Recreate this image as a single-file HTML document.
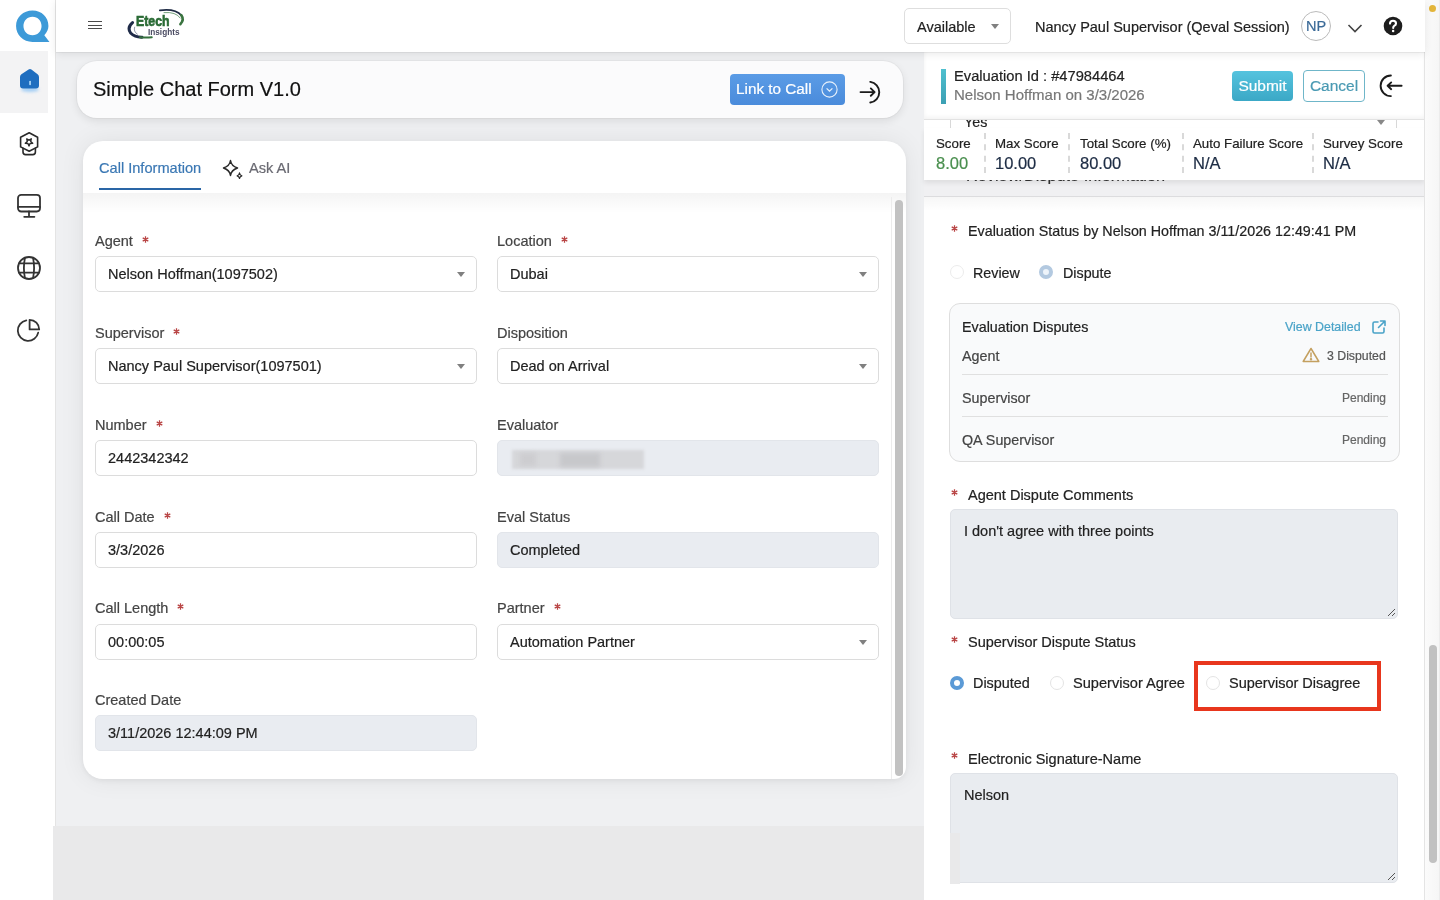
<!DOCTYPE html>
<html><head><meta charset="utf-8">
<style>
*{box-sizing:border-box;margin:0;padding:0}
html,body{width:1440px;height:900px;overflow:hidden;background:#fff;-webkit-font-smoothing:antialiased;font-family:"Liberation Sans",sans-serif;color:#222}
.abs{position:absolute}
span,div{-webkit-text-stroke:0.2px currentColor}
body>div,body>svg{will-change:transform}
#side{left:0;top:0;width:56px;height:900px;background:#fff;border-right:1px solid #e4e4e4}
#hdr{left:56px;top:0;width:1369px;height:52px;background:#fff;box-shadow:0 1px 0 rgba(0,0,0,.05),0 2px 8px rgba(0,0,0,.09);z-index:2}
#main{left:56px;top:52px;width:868px;height:848px;background:#eff0f2}
#mainbot{left:53px;top:826px;width:873px;height:74px;background:#e9e9ea}
#right{left:924px;top:52px;width:501px;height:848px;background:#fff}
#vscroll{left:1424px;top:0;width:16px;height:900px;background:linear-gradient(90deg,#fbfbfb,#f6f6f6);border-left:1px solid #e4e4e4;border-right:1px solid #ececec}
.card{background:#fafafa;border-radius:20px;box-shadow:0 2px 6px rgba(0,0,0,.08)}
.lbl{font-size:14.5px;color:#444}
.req{stroke:#b94545;stroke-width:1.25;fill:none;margin-left:9px;vertical-align:top;position:relative;top:3px}
.rstar{position:absolute;stroke:#b94545;stroke-width:1.25;fill:none}
.inp{height:36px;border:1px solid #dcdcdc;border-radius:5px;background:#fff;font-size:14.5px;color:#222;padding:0 12px;line-height:35px}
.inp.dis{background:#e9ecf1;border-color:#e2e5ea}
.caret{position:absolute;right:11px;top:14.5px;width:0;height:0;border-left:4.5px solid transparent;border-right:4.5px solid transparent;border-top:5px solid #808080}
</style></head>
<body>
<div id="side" class="abs">
  <svg class="abs" style="left:13.5px;top:8px" width="37" height="37" viewBox="0 0 36 36">
    <path d="M18 2.5 C9 2.5 2 9 2 17.5 C2 26 9 33 18 33 L34.5 33 L29.5 26.5 C32 23.8 33.5 20.8 33.5 17.5 C33.5 9 27 2.5 18 2.5 Z M18 8.5 C23.2 8.5 26.8 12.5 26.8 17.5 C26.8 22.5 23.2 26.5 18 26.5 C12.8 26.5 9.2 22.5 9.2 17.5 C9.2 12.5 12.8 8.5 18 8.5 Z" fill="#3d9ad8" fill-rule="evenodd"/>
  </svg>
  <div class="abs" style="left:0;top:51px;width:48px;height:62px;background:#f3f3f4"></div>
  <svg class="abs" style="left:14px;top:62px" width="32" height="36" viewBox="0 0 32 36">
    <defs><filter id="hb" x="-50%" y="-50%" width="200%" height="200%"><feGaussianBlur stdDeviation="1.6"/></filter></defs>
    <ellipse cx="16" cy="27.5" rx="9" ry="2.6" fill="#8cc4f5" opacity=".75" filter="url(#hb)"/>
    <path d="M14.6 7.6 Q16 6.6 17.4 7.6 L23.6 12.2 Q25 13.2 25 15 L25 23.6 Q25 26.6 22 26.6 L9 26.6 Q6 26.6 6 23.6 L6 15 Q6 13.2 7.4 12.2 Z" fill="#1f6ebf"/>
    <rect x="15.3" y="18.8" width="1.5" height="4.4" rx=".75" fill="#bfe6ff"/>
  </svg>
  <svg class="abs" style="left:19px;top:131px" width="21" height="26" viewBox="0 0 21 26" fill="none" stroke="#2a2a2a" stroke-width="1.6" stroke-linejoin="round" stroke-linecap="round">
    <path d="M10.2 1.7 L18.6 6.3 L18.6 15.9 L10.2 20.3 L1.6 15.9 L1.6 6.3 Z"/>
    <path d="M4 17.3 L4 21 Q4 23.6 6.6 23.6 L13.8 23.6 Q16.4 23.6 16.4 21 L16.4 17.3"/>
    <path d="M10.00 14.90 L8.94 12.46 L6.29 12.21 L8.29 10.44 L7.71 7.84 L10.00 9.20 L12.29 7.84 L11.71 10.44 L13.71 12.21 L11.06 12.46 Z" stroke-width="1.4"/>
  </svg>
  <svg class="abs" style="left:16px;top:193px" width="26" height="26" viewBox="0 0 26 26" fill="none" stroke="#333" stroke-width="1.8" stroke-linecap="round">
    <rect x="2" y="1.9" width="22" height="16.6" rx="3.2"/>
    <path d="M2 13.9 L24 13.9"/>
    <path d="M13 18.5 L13 23.6 M8.2 23.8 L18.4 23.8"/>
  </svg>
  <svg class="abs" style="left:16px;top:255px" width="26" height="26" viewBox="0 0 26 26" fill="none" stroke="#333" stroke-width="1.8">
    <circle cx="13" cy="13" r="11"/>
    <path d="M9 2.6 Q6.8 13 9 23.4 M17 2.6 Q19.2 13 17 23.4"/>
    <path d="M2.6 8.4 L23.4 8.4 M2.6 17.6 L23.4 17.6"/>
  </svg>
  <svg class="abs" style="left:16px;top:318px" width="26" height="26" viewBox="0 0 26 26" fill="none" stroke="#333" stroke-width="1.8" stroke-linejoin="round">
    <path d="M10.3 2.4 A10.3 10.3 0 1 0 22.2 14.6" stroke-linecap="round"/>
    <path d="M13.6 1.8 A9.6 9.6 0 0 1 23.2 11.4 L13.6 11.4 Z"/>
  </svg>
</div>
<div id="hdr" class="abs">
  <div class="abs" style="left:32px;top:21px;width:14px;height:1.3px;background:#4a4a4a"></div>
  <div class="abs" style="left:32px;top:24.6px;width:14px;height:1.3px;background:#4a4a4a"></div>
  <div class="abs" style="left:32px;top:28.2px;width:14px;height:1.3px;background:#4a4a4a"></div>
  <svg class="abs" style="left:70px;top:7px" width="62" height="34" viewBox="0 0 62 34" fill="none" stroke-linecap="round">
    <path d="M33.8 3.4 Q49 1.2 55.6 8.6" stroke="#1f2b45" stroke-width="1.7"/>
    <path d="M38 5.6 Q50 4.6 54.2 11" stroke="#3f7c4a" stroke-width="0.9" opacity=".8"/>
    <path d="M55.2 8 Q58.6 12.6 54.4 17.2" stroke="#3a7440" stroke-width="2.6"/>
    <path d="M6.5 15.6 Q0.8 20.5 4.6 26 Q9 30.4 16 30.2" stroke="#1f2b48" stroke-width="3"/>
    <path d="M14 30.3 Q20 30.8 25.8 30.3" stroke="#35703d" stroke-width="1.9"/>
    <path d="M8.6 20.2 Q7.2 24.6 11.4 27.2" stroke="#55607a" stroke-width="0.9" opacity=".7"/>
    <text x="10" y="19.2" style="font-family:'Liberation Sans';font-weight:700;font-size:15.5px" fill="#2a6b35" stroke="#2a6b35" stroke-width="0.7" textLength="33.5" lengthAdjust="spacingAndGlyphs">Etech</text>
    <text x="22" y="27.7" style="font-family:'Liberation Sans';font-weight:700;font-size:8.8px" fill="#4a4b62" textLength="31.5" lengthAdjust="spacingAndGlyphs">Insights</text>
  </svg>
  <div class="abs" style="left:848px;top:8px;width:107px;height:36px;border:1px solid #dedede;border-radius:5px;background:#fff">
    <span class="abs" style="left:12px;top:10px;font-size:14.5px;color:#222">Available</span>
    <div class="abs" style="left:85.5px;top:14.5px;width:0;height:0;border-left:4.5px solid transparent;border-right:4.5px solid transparent;border-top:5.5px solid #808080"></div>
  </div>
  <span class="abs" style="left:979px;top:19px;font-size:14.5px;color:#222;white-space:nowrap">Nancy Paul Supervisor (Qeval Session)</span>
  <div class="abs" style="left:1245px;top:11px;width:30px;height:30px;border:1px solid #bbb;border-radius:50%;font-size:14.5px;color:#3b6a97;text-align:center;line-height:29px">NP</div>
  <svg class="abs" style="left:1291px;top:22px" width="16" height="12" viewBox="0 0 16 12" fill="none" stroke="#444" stroke-width="1.6"><path d="M1.5 3 L8 9.5 L14.5 3"/></svg>
  <svg class="abs" style="left:1327px;top:16px" width="20" height="20" viewBox="0 0 20 20"><circle cx="10" cy="10" r="9.3" fill="#1d1d1d"/><path d="M7 7.6 Q7 4.8 10 4.8 Q13 4.8 13 7.4 Q13 9 11.2 9.9 Q10.2 10.5 10.2 12" fill="none" stroke="#fff" stroke-width="2.1" stroke-linecap="round"/><circle cx="10.1" cy="14.9" r="1.25" fill="#fff"/></svg>
</div>
<div id="main" class="abs">
  <div class="abs card" style="left:21px;top:9px;width:826px;height:57px;background:#fbfbfc;box-shadow:0 0 0 1px rgba(0,0,0,.03),0 3px 8px rgba(0,0,0,.09)">
    <span class="abs" style="left:16px;top:17px;font-size:20px;color:#111;white-space:nowrap">Simple Chat Form V1.0</span>
    <div class="abs" style="left:653px;top:13px;width:115px;height:31px;border-radius:4px;background:linear-gradient(#5b9ce6,#4a8bdb)">
      <span class="abs" style="left:6px;top:6px;font-size:15.3px;color:#fff;white-space:nowrap">Link to Call</span>
      <svg class="abs" style="left:91px;top:7px" width="17" height="17" viewBox="0 0 17 17" fill="none" stroke="#e8f1fb" stroke-width="1.1"><circle cx="8.5" cy="8.5" r="7.6"/><path d="M5.6 7.4 L8.5 10.2 L11.4 7.4" stroke-width="1.3"/></svg>
    </div>
    <svg class="abs" style="left:781px;top:20px" width="26" height="24" viewBox="0 0 26 24" fill="none" stroke="#1b1b1b" stroke-width="1.9" stroke-linecap="round" stroke-linejoin="round"><path d="M12.3 0.9 A10.4 10.4 0 0 1 12.3 21.5"/><path d="M2.5 11.1 L16.6 11.1 M12.8 7.4 L16.6 11.1 L12.8 14.8"/></svg>
  </div>
  <div class="abs" style="left:27px;top:89px;width:823px;height:638px;background:#fff;border-radius:20px 20px 12px 20px;box-shadow:0 2px 5px rgba(0,0,0,.05),0 0 26px rgba(0,0,0,.07);overflow:hidden">
    <span class="abs" style="left:16px;top:19px;font-size:14.6px;color:#3b78b4;white-space:nowrap">Call Information</span>
    <div class="abs" style="left:16px;top:47px;width:102px;height:2px;background:#2a66a6"></div>
    <svg class="abs" style="left:139px;top:18px" width="21" height="20" viewBox="0 0 21 20" fill="none" stroke="#2a2a2a" stroke-width="1.5" stroke-linejoin="round">
      <path d="M8.5 1.5 Q9.3 7 15.5 9 Q9.3 11 8.5 16.5 Q7.7 11 1.5 9 Q7.7 7 8.5 1.5 Z"/>
      <path d="M17.5 14 Q17.8 16.1 19.8 16.8 Q17.8 17.5 17.5 19.5 Q17.2 17.5 15.2 16.8 Q17.2 16.1 17.5 14 Z" stroke-width="1.3"/>
    </svg>
    <span class="abs" style="left:166px;top:19px;font-size:14.6px;color:#6a6a72;white-space:nowrap">Ask AI</span>
    <div class="abs" style="left:0;top:52px;width:823px;height:20px;background:linear-gradient(rgba(0,0,0,.045),rgba(0,0,0,0))"></div>
    <div class="abs" style="left:808px;top:56px;width:1px;height:582px;background:#ececec"></div><div class="abs" style="left:812px;top:59px;width:8px;height:576px;border-radius:4px;background:#c2c2c2"></div>
    <!--F--><span class="abs lbl" style="left:12px;top:92px">Agent<svg class="req" width="7" height="7" viewBox="0 0 7 7"><path d="M3.5 .3V6.7M.7 1.9L6.3 5.1M.7 5.1L6.3 1.9"/></svg></span><div class="abs inp" style="left:12px;top:115px;width:382px">Nelson Hoffman(1097502)<div class="caret"></div></div><span class="abs lbl" style="left:414px;top:92px">Location<svg class="req" width="7" height="7" viewBox="0 0 7 7"><path d="M3.5 .3V6.7M.7 1.9L6.3 5.1M.7 5.1L6.3 1.9"/></svg></span><div class="abs inp" style="left:414px;top:115px;width:382px">Dubai<div class="caret"></div></div><span class="abs lbl" style="left:12px;top:184px">Supervisor<svg class="req" width="7" height="7" viewBox="0 0 7 7"><path d="M3.5 .3V6.7M.7 1.9L6.3 5.1M.7 5.1L6.3 1.9"/></svg></span><div class="abs inp" style="left:12px;top:207px;width:382px">Nancy Paul Supervisor(1097501)<div class="caret"></div></div><span class="abs lbl" style="left:414px;top:184px">Disposition</span><div class="abs inp" style="left:414px;top:207px;width:382px">Dead on Arrival<div class="caret"></div></div><span class="abs lbl" style="left:12px;top:276px">Number<svg class="req" width="7" height="7" viewBox="0 0 7 7"><path d="M3.5 .3V6.7M.7 1.9L6.3 5.1M.7 5.1L6.3 1.9"/></svg></span><div class="abs inp" style="left:12px;top:299px;width:382px">2442342342</div><span class="abs lbl" style="left:414px;top:276px">Evaluator</span><div class="abs inp dis" style="left:414px;top:299px;width:382px"><div class="abs" style="left:14px;top:9px;width:132px;height:19px;background:#d6d7da;filter:blur(1.5px)"></div><div class="abs" style="left:22px;top:12px;width:16px;height:13px;background:#cdcdd0;filter:blur(2px)"></div><div class="abs" style="left:62px;top:12px;width:40px;height:14px;background:#c7c8cb;filter:blur(2px)"></div></div><span class="abs lbl" style="left:12px;top:368px">Call Date<svg class="req" width="7" height="7" viewBox="0 0 7 7"><path d="M3.5 .3V6.7M.7 1.9L6.3 5.1M.7 5.1L6.3 1.9"/></svg></span><div class="abs inp" style="left:12px;top:391px;width:382px">3/3/2026</div><span class="abs lbl" style="left:414px;top:368px">Eval Status</span><div class="abs inp dis" style="left:414px;top:391px;width:382px">Completed</div><span class="abs lbl" style="left:12px;top:459px">Call Length<svg class="req" width="7" height="7" viewBox="0 0 7 7"><path d="M3.5 .3V6.7M.7 1.9L6.3 5.1M.7 5.1L6.3 1.9"/></svg></span><div class="abs inp" style="left:12px;top:483px;width:382px">00:00:05</div><span class="abs lbl" style="left:414px;top:459px">Partner<svg class="req" width="7" height="7" viewBox="0 0 7 7"><path d="M3.5 .3V6.7M.7 1.9L6.3 5.1M.7 5.1L6.3 1.9"/></svg></span><div class="abs inp" style="left:414px;top:483px;width:382px">Automation Partner<div class="caret"></div></div><span class="abs lbl" style="left:12px;top:551px">Created Date</span><div class="abs inp dis" style="left:12px;top:574px;width:382px">3/11/2026 12:44:09 PM</div><!--/F-->
  </div>
</div>
<div id="mainbot" class="abs"></div>
<div id="right" class="abs">
  <!-- content under the sticky header -->
  <div class="abs" style="left:26px;top:66px;width:447px;height:30px;border-left:1px solid #d8d8d8;border-right:1px solid #d8d8d8"></div>
  <span class="abs" style="left:40px;top:62px;font-size:14.3px;color:#222">Yes</span>
  <div class="abs" style="left:453px;top:68px;width:0;height:0;border-left:4.5px solid transparent;border-right:4.5px solid transparent;border-top:5px solid #888"></div>
  
  <div class="abs" style="left:0;top:100px;width:501px;height:44px;background:#f0f0f2"></div>
  <span class="abs" style="left:42px;top:114px;font-size:16.3px;color:#333;white-space:nowrap">Review/Dispute Information</span>
  <div class="abs" style="left:0;top:144px;width:501px;height:1px;background:#dcdcde"></div>
  <div class="abs" style="left:0;top:145px;width:501px;height:14px;background:linear-gradient(rgba(0,0,0,.035),rgba(0,0,0,0))"></div>
  <!-- eval header -->
  <div class="abs" style="left:0;top:0;width:501px;height:68px;background:#fff;border-bottom:1px solid #e3e3e3;box-shadow:0 -2px 4px rgba(0,0,0,.05) inset">
    <div class="abs" style="left:17px;top:17px;width:5px;height:35px;background:linear-gradient(#4fc0cf,#3b9fb3)"></div>
    <span class="abs" style="left:30px;top:16px;font-size:14.7px;color:#222;white-space:nowrap">Evaluation Id : #47984464</span>
    <span class="abs" style="left:30px;top:34px;font-size:15px;color:#777;white-space:nowrap">Nelson Hoffman on 3/3/2026</span>
    <div class="abs" style="left:308px;top:19px;width:61px;height:30px;border-radius:4px;background:linear-gradient(#55c3de,#3ba8c6);color:#fff;font-size:15.5px;text-align:center;line-height:30px">Submit</div>
    <div class="abs" style="left:379px;top:18px;width:62px;height:32px;border-radius:4px;border:1px solid #6fb6c9;background:#fff;color:#4a9ab3;font-size:15.5px;text-align:center;line-height:30px">Cancel</div>
    <svg class="abs" style="left:454px;top:21px" width="26" height="26" viewBox="0 0 26 26" fill="none" stroke="#1b1b1b" stroke-width="1.9" stroke-linecap="round" stroke-linejoin="round">
      <path d="M12.9 2.5 A10.3 10.3 0 0 0 12.9 23.1"/>
      <path d="M23.6 12.8 L9.6 12.8 M13.2 9.4 L9.6 12.8 L13.2 16.2"/>
    </svg>
  </div>
  <!-- score bar -->
  <div class="abs" style="left:0;top:76px;width:501px;height:52px;background:#fff;box-shadow:0 3px 5px rgba(0,0,0,.08)">
    <span class="abs" style="left:12px;top:8px;font-size:13.3px;color:#222">Score</span>
    <span class="abs" style="left:12px;top:26px;font-size:16.5px;color:#4a8f4f">8.00</span>
    <div class="abs" style="left:60px;top:5px;height:40px;border-left:2px dashed #d9d9d9"></div>
    <span class="abs" style="left:71px;top:8px;font-size:13.3px;color:#222;white-space:nowrap">Max Score</span>
    <span class="abs" style="left:71px;top:26px;font-size:16.5px;color:#1d2c44">10.00</span>
    <div class="abs" style="left:144px;top:5px;height:40px;border-left:2px dashed #d9d9d9"></div>
    <span class="abs" style="left:156px;top:8px;font-size:13.3px;color:#222;white-space:nowrap">Total Score (%)</span>
    <span class="abs" style="left:156px;top:26px;font-size:16.5px;color:#1d2c44">80.00</span>
    <div class="abs" style="left:258px;top:5px;height:40px;border-left:2px dashed #d9d9d9"></div>
    <span class="abs" style="left:269px;top:8px;font-size:13.3px;color:#222;white-space:nowrap">Auto Failure Score</span>
    <span class="abs" style="left:269px;top:26px;font-size:16.5px;color:#1d2c44">N/A</span>
    <div class="abs" style="left:388px;top:5px;height:40px;border-left:2px dashed #d9d9d9"></div>
    <span class="abs" style="left:399px;top:8px;font-size:13.3px;color:#222;white-space:nowrap">Survey Score</span>
    <span class="abs" style="left:399px;top:26px;font-size:16.5px;color:#1d2c44">N/A</span>
  </div>
  <!-- eval status -->
  <svg class="rstar" style="left:26.5px;top:173px" width="7" height="7" viewBox="0 0 7 7"><path d="M3.5 .3V6.7M.7 1.9L6.3 5.1M.7 5.1L6.3 1.9"/></svg>
  <span class="abs" style="left:44px;top:171px;font-size:14.3px;color:#222;white-space:nowrap">Evaluation Status by Nelson Hoffman 3/11/2026 12:49:41 PM</span>
  <div class="abs" style="left:25.5px;top:213px;width:14px;height:14px;border-radius:50%;border:1px solid #ececec;background:#fff"></div>
  <span class="abs" style="left:49px;top:213px;font-size:14.3px;color:#222">Review</span>
  <div class="abs" style="left:115px;top:213px;width:14px;height:14px;border-radius:50%;border:4px solid #b3c9e0;background:#eef4fa"></div>
  <span class="abs" style="left:139px;top:213px;font-size:14.3px;color:#222">Dispute</span>
  <!-- disputes card -->
  <div class="abs" style="left:25px;top:251px;width:451px;height:159px;border:1px solid #dedede;border-radius:11px;background:#f9fafb">
    <span class="abs" style="left:12px;top:15px;font-size:14.3px;color:#222;white-space:nowrap">Evaluation Disputes</span>
    <span class="abs" style="left:335px;top:16px;font-size:12.4px;color:#4aa3c8;white-space:nowrap">View Detailed</span>
    <svg class="abs" style="left:421px;top:15px" width="16" height="16" viewBox="0 0 16 16" fill="none" stroke="#4aa3c8" stroke-width="1.6" stroke-linecap="round" stroke-linejoin="round"><path d="M7 3 L3.5 3 Q2 3 2 4.5 L2 12.5 Q2 14 3.5 14 L11.5 14 Q13 14 13 12.5 L13 9"/><path d="M9.5 2 L14 2 L14 6.5 M14 2 L7.5 8.5"/></svg>
    <span class="abs" style="left:12px;top:44px;font-size:14.3px;color:#444">Agent</span>
    <svg class="abs" style="left:352px;top:43px" width="18" height="16" viewBox="0 0 18 16" fill="none" stroke="#c4a060" stroke-width="1.5" stroke-linejoin="round"><path d="M9 1.5 L16.8 14.5 L1.2 14.5 Z"/><path d="M9 6 L9 10" stroke-linecap="round"/><circle cx="9" cy="12.2" r=".5" fill="#c4a060"/></svg>
    <span class="abs" style="left:377px;top:45px;font-size:12.3px;color:#555;white-space:nowrap">3 Disputed</span>
    <div class="abs" style="left:12px;top:70px;width:426px;height:1px;background:#e0e0e0"></div>
    <span class="abs" style="left:12px;top:86px;font-size:14.3px;color:#444">Supervisor</span>
    <span class="abs" style="left:392px;top:87px;font-size:12px;color:#666">Pending</span>
    <div class="abs" style="left:12px;top:112px;width:426px;height:1px;background:#e0e0e0"></div>
    <span class="abs" style="left:12px;top:128px;font-size:14.3px;color:#444">QA Supervisor</span>
    <span class="abs" style="left:392px;top:129px;font-size:12px;color:#666">Pending</span>
  </div>
  <!-- agent dispute comments -->
  <svg class="rstar" style="left:26.5px;top:437px" width="7" height="7" viewBox="0 0 7 7"><path d="M3.5 .3V6.7M.7 1.9L6.3 5.1M.7 5.1L6.3 1.9"/></svg>
  <span class="abs" style="left:44px;top:435px;font-size:14.5px;color:#222;white-space:nowrap">Agent Dispute Comments</span>
  <div class="abs" style="left:26px;top:457px;width:448px;height:110px;border:1px solid #dfe2e7;border-radius:5px;background:#e9ecf0">
    <span class="abs" style="left:13px;top:13px;font-size:14.5px;color:#222;white-space:nowrap">I don't agree with three points</span>
    <svg class="abs" style="right:1px;bottom:1px" width="9" height="9" viewBox="0 0 9 9" stroke="#555" stroke-width="1"><path d="M1 8 L8 1 M5 8 L8 5"/></svg>
  </div>
  <!-- supervisor dispute status -->
  <svg class="rstar" style="left:26.5px;top:584px" width="7" height="7" viewBox="0 0 7 7"><path d="M3.5 .3V6.7M.7 1.9L6.3 5.1M.7 5.1L6.3 1.9"/></svg>
  <span class="abs" style="left:44px;top:582px;font-size:14.5px;color:#222;white-space:nowrap">Supervisor Dispute Status</span>
  <div class="abs" style="left:26px;top:624px;width:14px;height:14px;border-radius:50%;border:4px solid #5b9ad6;background:#fff"></div>
  <span class="abs" style="left:49px;top:623px;font-size:14.4px;color:#222">Disputed</span>
  <div class="abs" style="left:126px;top:624px;width:14px;height:14px;border-radius:50%;border:1px solid #e4e4e4;background:#fff"></div>
  <span class="abs" style="left:149px;top:623px;font-size:14.6px;color:#222;white-space:nowrap">Supervisor Agree</span>
  <div class="abs" style="left:270px;top:609px;width:187px;height:49.5px;border:4px solid #e8361d"></div>
  <div class="abs" style="left:282px;top:624px;width:14px;height:14px;border-radius:50%;border:1px solid #e4e4e4;background:#fff"></div>
  <span class="abs" style="left:305px;top:623px;font-size:14.5px;color:#222;white-space:nowrap">Supervisor Disagree</span>
  <!-- electronic signature -->
  <svg class="rstar" style="left:26.5px;top:700px" width="7" height="7" viewBox="0 0 7 7"><path d="M3.5 .3V6.7M.7 1.9L6.3 5.1M.7 5.1L6.3 1.9"/></svg>
  <span class="abs" style="left:44px;top:699px;font-size:14.5px;color:#222;white-space:nowrap">Electronic Signature-Name</span>
  <div class="abs" style="left:26px;top:721px;width:448px;height:110px;border:1px solid #dfe2e7;border-radius:5px;background:#e9ecf0">
    <span class="abs" style="left:13px;top:13px;font-size:14.5px;color:#222">Nelson</span>
    <svg class="abs" style="right:1px;bottom:1px" width="9" height="9" viewBox="0 0 9 9" stroke="#555" stroke-width="1"><path d="M1 8 L8 1 M5 8 L8 5"/></svg>
  </div>
</div>
<div class="abs" style="left:950px;top:833px;width:10px;height:51px;background:#e9e9ea"></div>
<div id="vscroll" class="abs">
  <div class="abs" style="left:4px;top:645px;width:8px;height:218px;border-radius:4px;background:#c1c1c1"></div>
  <div class="abs" style="left:4px;top:4.5px;width:7px;height:7px;border-radius:50%;background:#e3b53a"></div>
</div>
</body></html>
